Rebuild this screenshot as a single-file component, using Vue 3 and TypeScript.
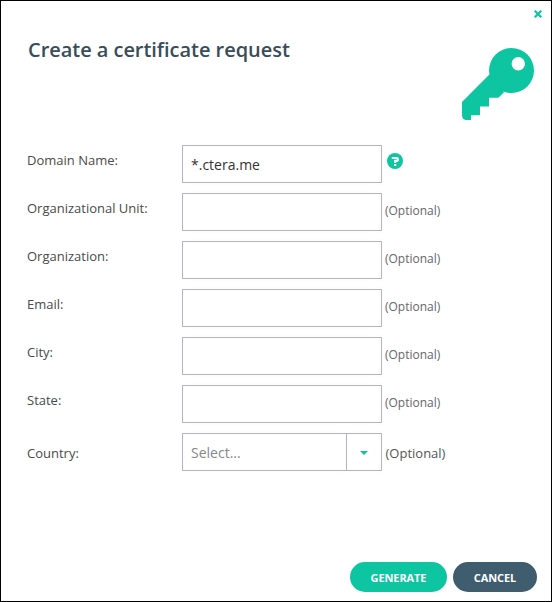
<script setup lang="ts">
import { ref } from 'vue'

interface Field {
  id: string
  label: string
  value: string
  help?: boolean
}

const fields = ref<Field[]>([
  { id: 'domain', label: 'Domain Name:', value: '*.ctera.me', help: true },
  { id: 'unit', label: 'Organizational Unit:', value: '' },
  { id: 'organization', label: 'Organization:', value: '' },
  { id: 'email', label: 'Email:', value: '' },
  { id: 'city', label: 'City:', value: '' },
  { id: 'state', label: 'State:', value: '' },
])
</script>

<template>
  <div class="dialog">
    <svg class="close" viewBox="0 0 8 8" width="8" height="8">
      <path d="M0.7 0.7L7.3 7.3M7.3 0.7L0.7 7.3" stroke="#0dc5a0" stroke-width="2.2" fill="none" />
    </svg>
    <header class="header">
      <h1 class="title">Create a certificate request</h1>
      <svg class="key" viewBox="0 0 72 73" width="72" height="73">
        <path
          fill="#0dc5a0"
          d="M27.4 26.6L0 54V67.5Q0.3 71.6 4 72H9V67.3H18V58.6H27V49.8H36.4L42 44.2Z"
        />
        <circle cx="49.5" cy="22.5" r="22.5" fill="#0dc5a0" />
        <circle cx="56.3" cy="15.7" r="6.7" fill="#fff" />
      </svg>
    </header>

    <form class="form" @submit.prevent>
      <div v-for="f in fields" :key="f.id" class="row">
        <label class="label" :for="f.id">{{ f.label }}</label>
        <input :id="f.id" v-model="f.value" class="box input" type="text" />
        <svg v-if="f.help" class="help" viewBox="0 0 16 16" width="16" height="16">
          <circle cx="8" cy="8" r="8" fill="#0dc5a0" />
          <path d="M4.8 5H9.6Q10.8 5 10.8 6V7Q10.8 7.9 9.8 7.9H8.2V10" fill="none" stroke="#fff" stroke-width="2.2" />
          <rect x="7.1" y="11" width="2.2" height="2" fill="#fff" />
        </svg>
        <span v-else class="optional">(Optional)</span>
      </div>
      <div class="row country">
        <span class="label">Country:</span>
        <div class="box select">
          <span class="placeholder">Select...</span>
          <span class="trigger">
            <svg viewBox="0 0 8 4" width="8" height="4"><path d="M0 0H8L4 4Z" fill="#0dc5a0" /></svg>
          </span>
        </div>
        <span class="optional">(Optional)</span>
      </div>
    </form>

    <footer class="footer">
      <button class="btn primary" type="button">GENERATE</button>
      <button class="btn secondary" type="button">CANCEL</button>
    </footer>
  </div>
</template>

<style>
body {
  margin: 0;
}
</style>

<style scoped>
.dialog {
  position: relative;
  box-sizing: border-box;
  width: 552px;
  height: 602px;
  border: 1px solid #000;
  background: #fff;
  padding: 0 14px 9px 26px;
  display: flex;
  flex-direction: column;
  font-family: "Open Sans", sans-serif;
  color: #4a4a4a;
}
.close {
  position: absolute;
  top: 9px;
  right: 9px;
}
.header {
  display: flex;
  justify-content: space-between;
  height: 144px;
  padding: 0 3px 0 1px;
}
.title {
  margin: 35px 0 0;
  font-size: 20px;
  line-height: 28px;
  font-weight: 600;
  letter-spacing: -0.04px;
  color: #384d5c;
  white-space: nowrap;
}
.key {
  margin-top: 47px;
}
.form {
  display: flex;
  flex-direction: column;
  gap: 10px;
}
.row {
  display: flex;
  height: 38px;
}
.label {
  width: 155px;
  font-size: 13px;
  line-height: 18px;
  padding-top: 6px;
}
.box {
  box-sizing: border-box;
  width: 200px;
  height: 38px;
  border: 1px solid #b3b3cc;
  border-radius: 0;
  background: #fff;
  font-size: 14px;
}
.input {
  padding: 0 8px;
  font-family: inherit;
  color: #333;
  outline: none;
}
.help {
  margin: 8px 0 0 5px;
}
.optional {
  margin-left: 3px;
  padding-top: 9px;
  font-size: 12px;
  line-height: 17px;
  color: #666;
}
.country .label {
  padding-top: 11px;
}
.country .optional {
  margin-left: 3.5px;
  padding-top: 11px;
  font-size: 13px;
  line-height: 18px;
  color: #555;
}
.select {
  display: flex;
}
.placeholder {
  flex: 1;
  padding-left: 8px;
  line-height: 37px;
  color: #888;
}
.trigger {
  width: 34px;
  border-left: 1px solid #b3b3cc;
  display: flex;
  align-items: center;
  justify-content: center;
  padding-top: 2px;
}
.footer {
  margin-top: auto;
  display: flex;
  justify-content: flex-end;
  gap: 6px;
}
.btn {
  width: 97px;
  height: 30px;
  padding: 0;
  border: 0;
  border-radius: 15px;
  background: #0dc5a0;
  color: #fff;
  font-family: inherit;
  font-size: 11px;
  font-weight: 700;
  letter-spacing: -0.1px;
}
.secondary {
  width: 84px;
  background: #3f5d6e;
}
</style>
